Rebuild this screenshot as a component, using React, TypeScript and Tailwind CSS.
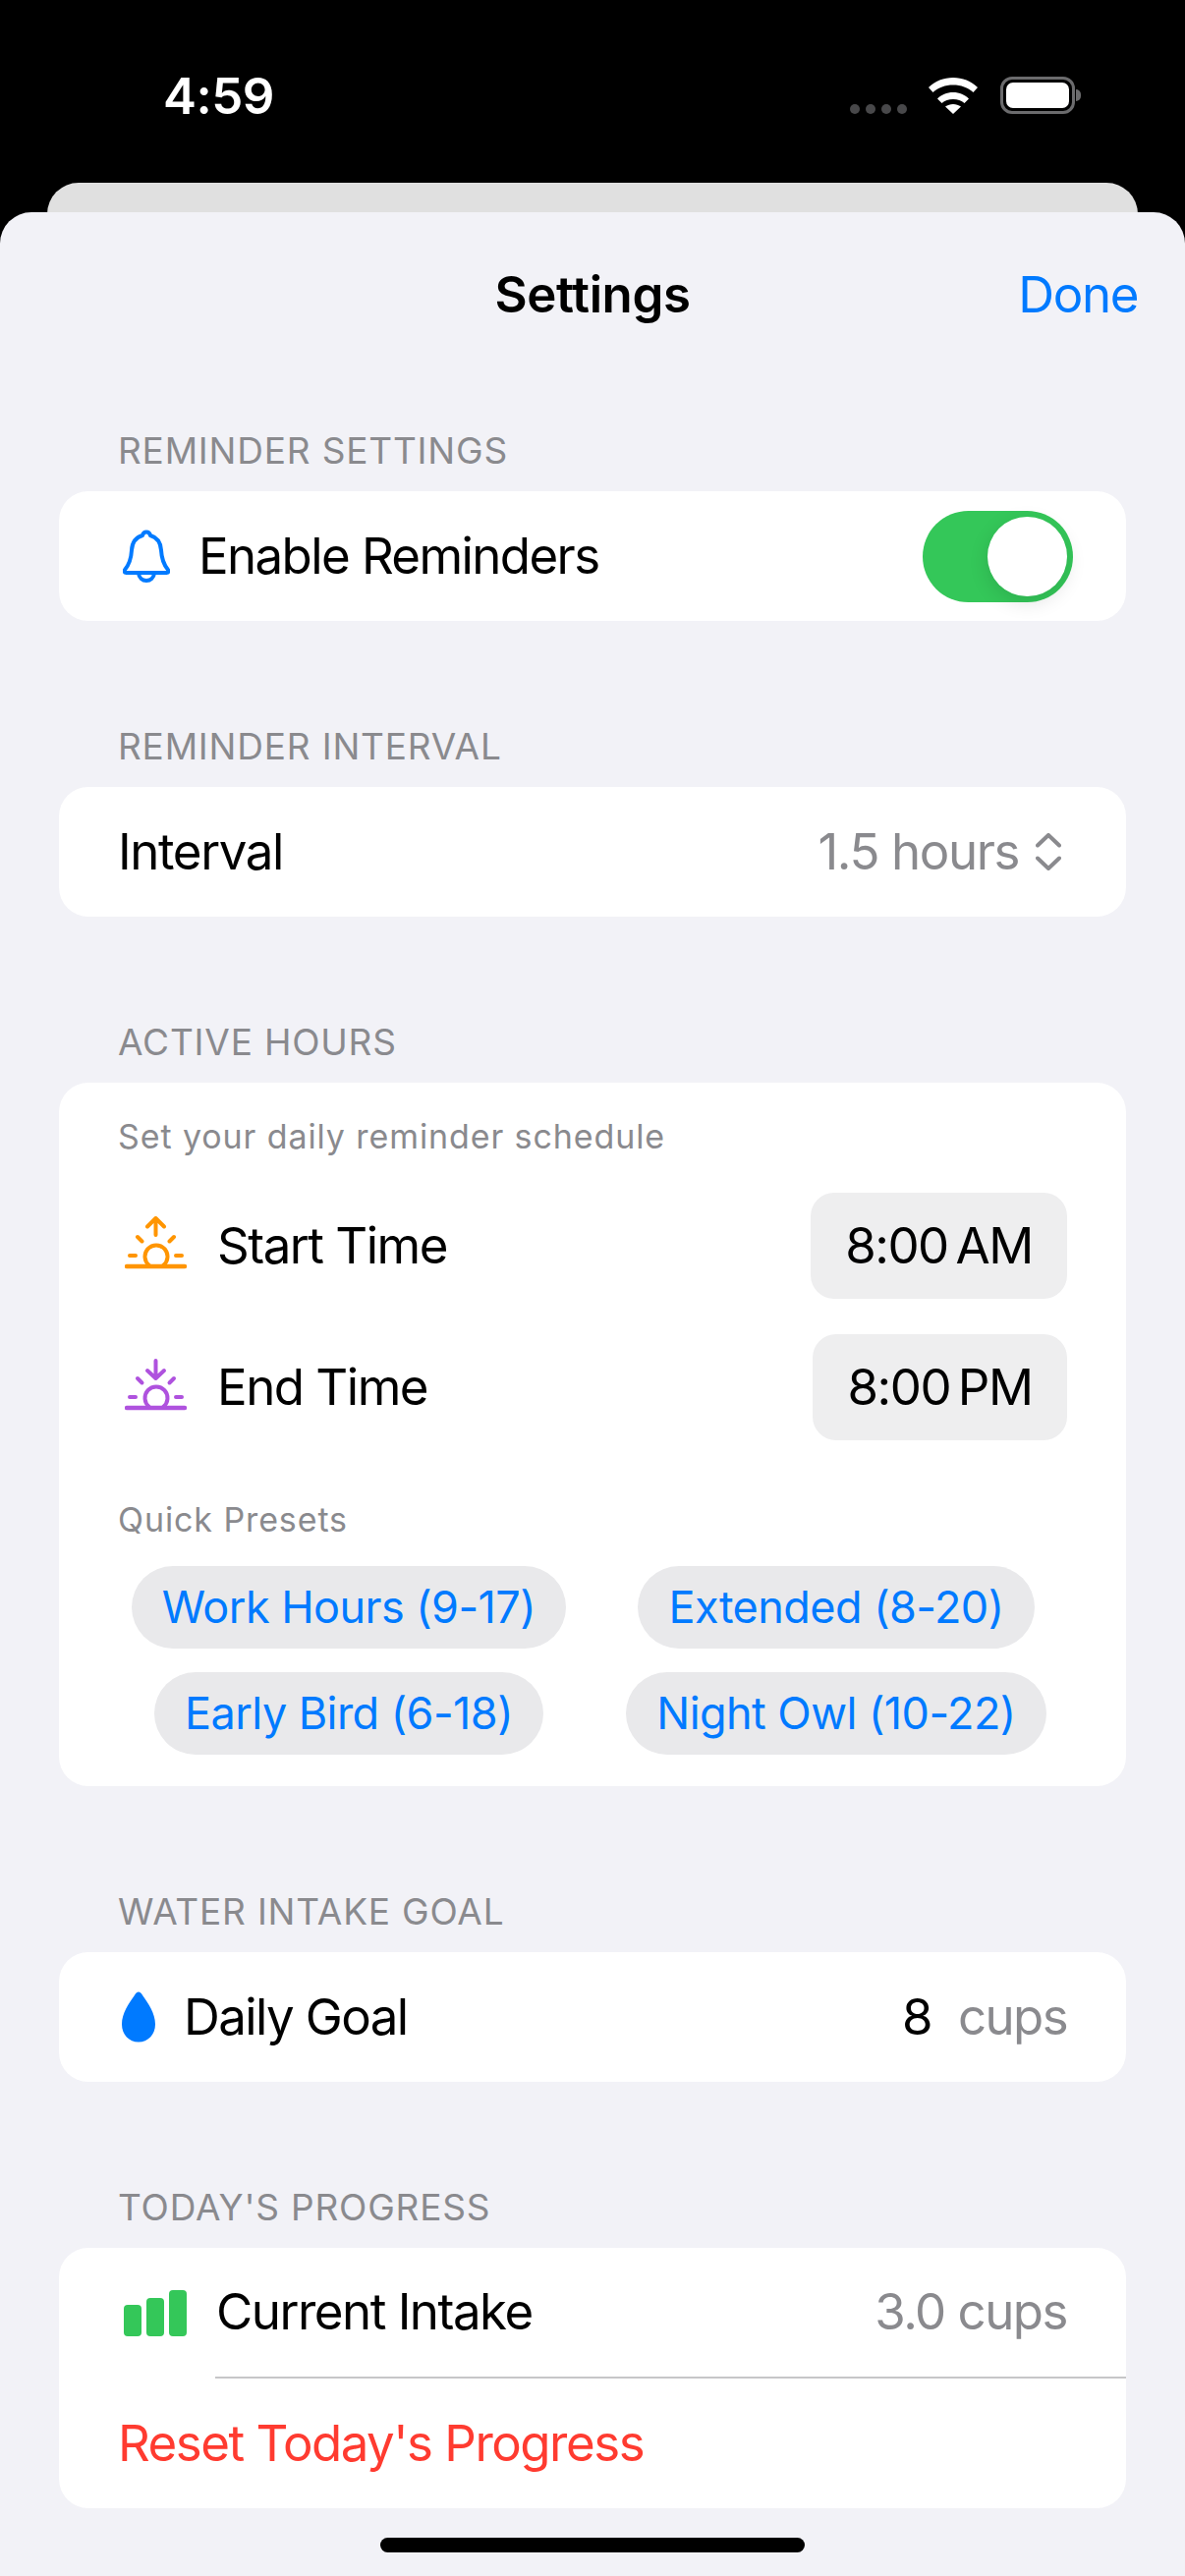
const font = { fontFamily: "Inter, 'Noto Sans', sans-serif" }

function SunIcon({ color, down }: { color: string; down?: boolean }) {
  return (
    <svg width="64" height="54" viewBox="0 0 64 54" fill="none" stroke={color} strokeWidth="4" strokeLinecap="round" strokeLinejoin="round" className="shrink-0">
      <path d="M2 51H61" strokeWidth="4.5" />
      <path d="M24.900 50A11.500 11.500 0 1 1 39.100 50" />
      <path d="M5 40H11M52 40H58M13 21L17.500 25.500M50 21L45.500 25.500" />
      {down ? <path d="M31.500 3V21M23 13L31.500 21L40 13" /> : <path d="M31.500 19V2M23 10.500L31.500 2L40 10.500" />}
    </svg>
  )
}

function SectionHeader({ title }: { title: string }) {
  return <div className="h-[85px] pl-[120px] pt-[20px] text-[37px] leading-[48px] tracking-[0.8px] text-[#8a8a8e] uppercase">{title}</div>
}

function Preset({ label }: { label: string }) {
  return (
    <div className="flex justify-center">
      <div className="h-[84px] px-[31px] flex items-center rounded-full bg-[#e9e9eb] text-[#007aff] text-[45px] tracking-[-0.55px]">{label}</div>
    </div>
  )
}

export default function App() {
  return (
    <div className="relative w-[1206px] h-[2622px] bg-black overflow-hidden" style={font}>
      {/* status bar */}
      <div className="h-[186px] relative">
        <div className="absolute left-[166px] top-[66px] text-white text-[51px] leading-[64px] font-semibold tracking-[-0.5px]">4:59</div>
        <div className="absolute left-[865px] top-[106px] flex gap-[6px]">
          <div className="w-[10px] h-[10px] rounded-full bg-[#48484a]" />
          <div className="w-[10px] h-[10px] rounded-full bg-[#48484a]" />
          <div className="w-[10px] h-[10px] rounded-full bg-[#48484a]" />
          <div className="w-[10px] h-[10px] rounded-full bg-[#48484a]" />
        </div>
        <svg className="absolute left-[945px] top-[79px]" width="50" height="37" viewBox="0 0 50 37" fill="white">
          <path d="M25 0C34.500 0 43.500 3.500 50 10L45.500 15C40 10 33 7.500 25 7.500C17 7.500 10 10 4.500 15L0 10C6.500 3.500 15.500 0 25 0Z" />
          <path d="M25 15C31.500 15 37 17.500 41 21.500L36.500 26C33.500 23.500 29.500 22 25 22C20.500 22 16.500 23.500 13.500 26L9 21.500C13 17.500 18.500 15 25 15Z" />
          <path d="M25 27C28 27 30.500 28 33 29.500L25 37L17 29.500C19.500 28 22 27 25 27Z" />
        </svg>
        <div className="absolute left-[1018px] top-[78px] w-[76px] h-[38px] rounded-[12px] border-[3px] border-[#6b6b6d] p-[3px]">
          <div className="w-full h-full rounded-[7px] bg-white" />
        </div>
        <div className="absolute left-[1095px] top-[91px] w-[5px] h-[12px] rounded-r-full bg-[#6b6b6d]" />
      </div>

      {/* card behind the sheet */}
      <div className="mx-[48px] h-[60px] rounded-t-[32px] bg-[#e0e0e0]" />

      {/* sheet */}
      <div className="absolute left-0 right-0 top-[216px] bottom-0 rounded-t-[32px] bg-[#f2f2f7]">
        <div className="h-[199px] relative flex items-start justify-center pt-[52px]">
          <div className="text-[51px] leading-[64px] font-semibold text-black tracking-[-0.4px]">Settings</div>
          <div className="absolute right-[48px] top-[52px] text-[51px] leading-[64px] text-[#007aff] tracking-[-1.4px]">Done</div>
        </div>

        <div className="flex flex-col">
          <SectionHeader title="Reminder Settings" />
          <div className="mx-[60px] h-[132px] rounded-[30px] bg-white flex items-center pl-[65px] pr-[54px] tracking-[-1.6px]">
            <svg width="48" height="54" viewBox="0 0 48 54" fill="none" stroke="#007aff" strokeWidth="4" strokeLinejoin="round" className="shrink-0">
              <path d="M24 2.500C26 2.500 27.500 4 28 6C35 8 38.500 13.500 39 21C39.500 30 41 35 46 41C47 42.500 46.500 44 44.500 44H3.500C1.500 44 1 42.500 2 41C7 35 8.500 30 9 21C9.500 13.500 13 8 20 6C20.500 4 22 2.500 24 2.500Z" />
              <path d="M16 44.500C16.500 49 20 52 24 52C28 52 31.500 49 32 44.500" />
            </svg>
            <div className="ml-[29px] text-[51px] text-black">Enable Reminders</div>
            <div className="ml-auto w-[153px] h-[93px] rounded-full bg-[#34c759] flex items-center justify-end pr-[6px]">
              <div className="w-[81px] h-[81px] rounded-full bg-white shadow-[0_6px_20px_rgba(0,0,0,0.12)]" />
            </div>
          </div>

          <div className="h-[84px]" />
          <SectionHeader title="Reminder Interval" />
          <div className="mx-[60px] h-[132px] rounded-[30px] bg-white flex items-center pl-[60px] pr-[66px] tracking-[-1.4px]">
            <div className="text-[51px] text-black">Interval</div>
            <div className="ml-auto text-[51px] text-[#8a8a8e]">1.5 hours</div>
            <svg width="26" height="38" viewBox="0 0 26 38" fill="none" stroke="#8a8a8e" strokeWidth="4" strokeLinecap="round" strokeLinejoin="round" className="ml-[17px] shrink-0">
              <path d="M2 12.500L13 2L24 12.500M2 25.500L13 36L24 25.500" />
            </svg>
          </div>

          <div className="h-[84px]" />
          <SectionHeader title="Active Hours" />
          <div className="mx-[60px] h-[716px] rounded-[30px] bg-white pl-[60px] pr-[60px] pt-[34px] flex flex-col">
            <div className="text-[34px] leading-[42px] tracking-[0.9px] text-[#8a8a8e]">Set your daily reminder schedule</div>
            <div className="mt-[36px] h-[108px] flex items-center tracking-[-1.5px]">
              <div className="ml-[7px] -mt-[7px]"><SunIcon color="#ff9500" /></div>
              <div className="ml-[30px] text-[51px] text-black">Start Time</div>
              <div className="ml-auto w-[261px] h-[108px] rounded-[24px] bg-[#eeeeef] flex items-center justify-center text-[51px] text-black">{"8:00\u202FAM"}</div>
            </div>
            <div className="mt-[36px] h-[108px] flex items-center tracking-[-1.5px]">
              <div className="ml-[7px] -mt-[7px]"><SunIcon color="#af52de" down /></div>
              <div className="ml-[30px] text-[51px] text-black">End Time</div>
              <div className="ml-auto w-[259px] h-[108px] rounded-[24px] bg-[#eeeeef] flex items-center justify-center text-[51px] text-black">{"8:00\u202FPM"}</div>
            </div>
            <div className="mt-[60px] text-[34px] leading-[42px] tracking-[0.9px] text-[#8a8a8e]">Quick Presets</div>
            <div className="mt-[26px] grid grid-cols-2 gap-y-[24px] -mx-[13px]">
              <Preset label="Work Hours (9-17)" />
              <Preset label="Extended (8-20)" />
              <Preset label="Early Bird (6-18)" />
              <Preset label="Night Owl (10-22)" />
            </div>
          </div>

          <div className="h-[84px]" />
          <SectionHeader title="Water Intake Goal" />
          <div className="mx-[60px] h-[132px] rounded-[30px] bg-white flex items-center pl-[63px] pr-[60px] tracking-[-1.6px]">
            <svg width="36" height="52" viewBox="0 0 36 52" fill="#007aff" className="shrink-0">
              <path d="M18 0.500C19.500 0.500 20.500 1.500 21.500 3C26 10 35 21 35 33.500C35 44 27.500 51.500 18 51.500C8.500 51.500 1 44 1 33.500C1 21 10 10 14.500 3C15.500 1.500 16.500 0.500 18 0.500Z" />
            </svg>
            <div className="ml-[28px] text-[51px] text-black">Daily Goal</div>
            <div className="ml-auto text-[51px] text-black">8</div>
            <div className="ml-[27px] text-[51px] text-[#8a8a8e]">cups</div>
          </div>

          <div className="h-[84px]" />
          <SectionHeader title="Today's Progress" />
          <div className="mx-[60px] h-[265px] rounded-[30px] bg-white flex flex-col tracking-[-1.5px]">
            <div className="h-[131px] flex items-center pl-[66px] pr-[60px]">
              <div className="flex items-end gap-[5px] shrink-0 mt-[2px]">
                <div className="w-[18px] h-[32px] rounded-[4px] bg-[#34c759]" />
                <div className="w-[18px] h-[39px] rounded-[4px] bg-[#34c759]" />
                <div className="w-[18px] h-[47px] rounded-[4px] bg-[#34c759]" />
              </div>
              <div className="ml-[30px] text-[51px] text-black">Current Intake</div>
              <div className="ml-auto text-[51px] text-[#8a8a8e]">3.0 cups</div>
            </div>
            <div className="ml-[159px] h-[2px] bg-[#c6c6c8]" />
            <div className="h-[132px] flex items-center pl-[60px] text-[51px] text-[#ff3b30]">Reset Today's Progress</div>
          </div>
        </div>
      </div>

      {/* home indicator */}
      <div className="absolute left-[387px] top-[2583px] w-[432px] h-[15px] rounded-full bg-black" />
    </div>
  )
}
